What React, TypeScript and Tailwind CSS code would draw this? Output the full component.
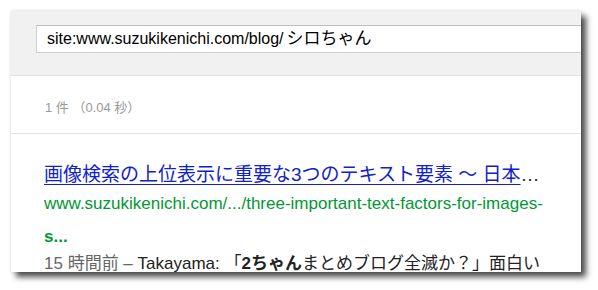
import React from 'react';

const font = { fontFamily: '"Liberation Sans", Arial, "Noto Sans CJK JP", sans-serif' };

const App: React.FC = () => {
  return (
    <div className="w-[598px] h-[290px] bg-white pl-[11px] pt-[11px]" style={font}>
      <div className="w-[570px] h-[261px] bg-white overflow-hidden shadow-[5px_5px_6px_rgba(0,0,0,0.7),0_0_3px_rgba(0,0,0,0.12)]">
        {/* search bar */}
        <div className="h-[65px] bg-[#f1f1f1] border-b border-[#e5e5e5] pt-[14px] pl-[25px]">
          <div className="w-[560px] h-[28px] bg-white border border-[#d0d0d0] border-t-[#c0c0c0] pl-[10px] flex items-center text-[16px] text-black whitespace-nowrap">
            site:www.suzukikenichi.com/blog/ <span className="text-[17px] ml-[3px]">シロちゃん</span>
          </div>
        </div>

        {/* stats */}
        <div className="h-[58px] border-b border-[#e5e5e5] pl-[34px] pt-[22px] text-[13px] text-[#999]">
          1 件 （0.04 秒）
        </div>

        {/* result */}
        <div className="pl-[33px] pt-[28px] pr-[20px]">
          <div className="text-[19px] leading-[26px] whitespace-nowrap">
            <a href="#" className="text-[#1122cc] underline underline-offset-[3px]">
              画像検索の上位表示に重要な3つのテキスト要素 〜 日本
            </a>
            <span className="text-[#222]">…</span>
          </div>
          <div className="text-[17px] leading-[33px] text-[#009933] whitespace-nowrap -mt-px">
            www.suzukikenichi.com/.../three-important-text-factors-for-images-
            <br />
            <span className="font-bold">s...</span>
          </div>
          <div className="text-[17px] leading-[24px] text-[#222] whitespace-nowrap mt-[-1px]">
            <span className="text-[#666]">15 時間前 – </span>Takayama: 「<b>2ちゃん</b>まとめブログ全滅か？」面白い
          </div>
        </div>
      </div>
    </div>
  );
};

export default App;
